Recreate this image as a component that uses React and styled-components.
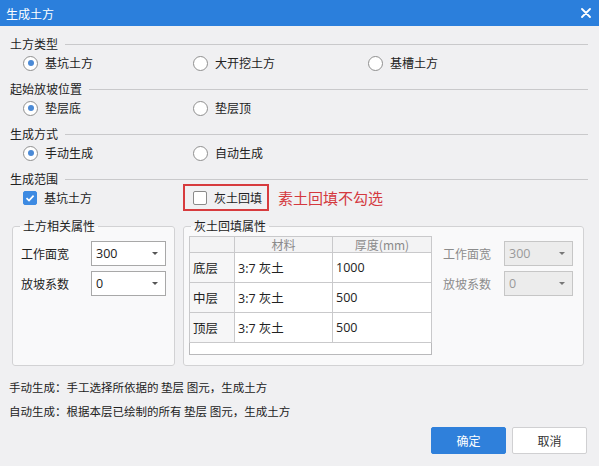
import styled, { createGlobalStyle } from 'styled-components';

const GlobalStyle = createGlobalStyle`
  html, body {
    margin: 0;
    padding: 0;
  }
  body {
    background: #f0f0f2;
    font-family: "Noto Sans CJK SC", "Noto Sans", sans-serif;
  }
`;

const Dialog = styled.div`
  width: 599px;
  height: 466px;
  display: flex;
  flex-direction: column;
  background: #f0f0f2;
  color: #222;
  font-size: 12px;
  overflow: hidden;
`;

const TitleBar = styled.div`
  height: 26px;
  flex-shrink: 0;
  display: flex;
  align-items: center;
  justify-content: space-between;
  padding: 0 8px 0 6px;
  background: #2b7fdc;
  color: #fff;
  font-size: 12px;
`;

const Body = styled.div`
  display: flex;
  flex-direction: column;
  padding: 8px 11px 0 10px;
`;

const SectionHeader = styled.div`
  display: flex;
  align-items: center;
  height: 20px;
  line-height: 20px;

  &::after {
    content: '';
    flex: 1;
    height: 1px;
    margin-left: 7px;
    background: #c9c9cb;
  }
`;

const OptionRow = styled.div`
  display: grid;
  grid-template-columns: ${(p) => p.$cols || '170px 175px 1fr'};
  align-items: start;
  height: 25px;
  padding-left: 13px;
`;

const Option = styled.label`
  display: flex;
  align-items: center;
  gap: 7px;
  height: 18px;
  line-height: 18px;
`;

const Radio = styled.span`
  position: relative;
  width: 13px;
  height: 13px;
  border: 1px solid #8f8f8f;
  border-radius: 50%;
  background: #fff;
  box-sizing: content-box;

  &::after {
    content: '';
    display: ${(p) => (p.$checked ? 'block' : 'none')};
    position: absolute;
    top: 3.5px;
    left: 3.5px;
    width: 6px;
    height: 6px;
    border-radius: 50%;
    background: #4b8ad6;
  }
`;

const Check = styled.span`
  display: flex;
  align-items: center;
  justify-content: center;
  width: 14px;
  height: 14px;
  box-sizing: border-box;
  border-radius: 2px;
  border: 1px solid ${(p) => (p.$checked ? '#3d8ae2' : '#8a8a8a')};
  background: ${(p) => (p.$checked ? '#3d8ae2' : '#fff')};
`;

const Marked = styled.div`
  display: flex;
  align-items: flex-start;
`;

const RedBox = styled.div`
  display: flex;
  margin-top: -5px;
  padding: 3px 5px 0 8px;
  height: 20px;
  border: 2px solid #d73b3e;
`;

const RedNote = styled.span`
  margin-left: 9px;
  margin-top: -1px;
  font-size: 15px;
  line-height: 20px;
  color: #d4393f;
  white-space: nowrap;
`;

const GroupRow = styled.div`
  display: flex;
  gap: 8px;
  margin: 4px 4px 0 2px;
  height: 148px;
`;

const GroupBox = styled.fieldset`
  margin: 0;
  padding: 0;
  min-width: 0;
  width: ${(p) => p.$width || 'auto'};
  flex: ${(p) => (p.$width ? '0 0 auto' : '1')};
  border: 1px solid #d2d2d4;
  border-radius: 3px;
  background: #f9f9fa;
  box-sizing: border-box;
`;

const Legend = styled.legend`
  margin-left: 7px;
  padding: 0 3px;
  line-height: 16px;
  font-size: 12px;
  color: #222;
`;

const PropGrid = styled.div`
  display: grid;
  grid-template-columns: ${(p) => p.$cols};
  grid-auto-rows: 25px;
  row-gap: 5px;
  align-items: center;
  padding: ${(p) => p.$pad};
  color: ${(p) => (p.$disabled ? '#8c8c8c' : '#222')};
`;

const Select = styled.div`
  display: flex;
  align-items: center;
  justify-content: space-between;
  height: 25px;
  box-sizing: border-box;
  padding: 0 7px 0 4px;
  border: 1px solid ${(p) => (p.$disabled ? '#c6c6c6' : '#a8a8a8')};
  background: ${(p) => (p.$disabled ? '#ececec' : '#fff')};
  color: ${(p) => (p.$disabled ? '#9a9a9a' : '#222')};
  font-family: "Open Sans", "Liberation Sans", sans-serif;
  font-size: 12.5px;

  &::after {
    content: '';
    border-left: 3px solid transparent;
    border-right: 3px solid transparent;
    border-top: 3px solid ${(p) => (p.$disabled ? '#777' : '#555')};
  }
`;

const FillPanel = styled.div`
  display: flex;
  align-items: flex-start;
  padding: 2px 0 0 5px;
`;

const Table = styled.table`
  width: 242px;
  border-collapse: collapse;
  table-layout: fixed;
  background: #fff;
  border: 1px solid #b9b9bb;
  font-size: 12.5px;
`;

const Th = styled.th`
  height: 15px;
  padding: 0;
  font-weight: normal;
  font-size: 12px;
  line-height: 15px;
  color: #8a8a8a;
  background: #f3f3f4;
  border: 1px solid #c9c9cb;
`;

const Td = styled.td`
  height: 29px;
  padding: 0 0 0 3px;
  border: 1px solid #c9c9cb;
  background: ${(p) => (p.$head ? '#f6f6f7' : '#fff')};
  font-family: "Open Sans", "Noto Sans CJK SC", sans-serif;
  white-space: nowrap;
`;

const EmptyTd = styled.td`
  height: 11px;
  padding: 0;
  border-top: 1px solid #c9c9cb;
  background: #fff;
`;

const Notes = styled.div`
  margin: 9px 0 0 -1px;
  line-height: 24px;
  font-size: 11.5px;
  color: #222;
`;

const Actions = styled.div`
  display: flex;
  justify-content: flex-end;
  gap: 6px;
  margin-top: 4px;
  padding-right: 1px;
`;

const Button = styled.button`
  width: 75px;
  height: 27px;
  border-radius: 2px;
  font-family: inherit;
  font-size: 12px;
  cursor: pointer;
  border: 1px solid ${(p) => (p.$primary ? '#2f80db' : '#d0d0d2')};
  background: ${(p) => (p.$primary ? '#2f80db' : '#fff')};
  color: ${(p) => (p.$primary ? '#fff' : '#333')};
`;

const CloseIcon = () => (
  <svg width="10" height="10" viewBox="0 0 10 10">
    <path d="M1 1 L9 9 M9 1 L1 9" stroke="#fff" strokeWidth="1.8" strokeLinecap="round" />
  </svg>
);

const Tick = () => (
  <svg width="10" height="10" viewBox="0 0 10 10">
    <path d="M1.5 5.2 L4 7.6 L8.6 2.6" fill="none" stroke="#fff" strokeWidth="1.7" />
  </svg>
);

const layers = [
  { name: '底层', material: '3:7 灰土', depth: '1000' },
  { name: '中层', material: '3:7 灰土', depth: '500' },
  { name: '顶层', material: '3:7 灰土', depth: '500' },
];

const RadioOption = ({ checked, children }) => (
  <Option>
    <Radio $checked={checked} />
    {children}
  </Option>
);

const App = () => {
  return (
    <Dialog>
      <GlobalStyle />
      <TitleBar>
        <span>生成土方</span>
        <CloseIcon />
      </TitleBar>
      <Body>
        <SectionHeader>土方类型</SectionHeader>
        <OptionRow>
          <RadioOption checked>基坑土方</RadioOption>
          <RadioOption>大开挖土方</RadioOption>
          <RadioOption>基槽土方</RadioOption>
        </OptionRow>

        <SectionHeader>起始放坡位置</SectionHeader>
        <OptionRow>
          <RadioOption checked>垫层底</RadioOption>
          <RadioOption>垫层顶</RadioOption>
        </OptionRow>

        <SectionHeader>生成方式</SectionHeader>
        <OptionRow>
          <RadioOption checked>手动生成</RadioOption>
          <RadioOption>自动生成</RadioOption>
        </OptionRow>

        <SectionHeader>生成范围</SectionHeader>
        <OptionRow $cols="160px 1fr">
          <Option>
            <Check $checked>
              <Tick />
            </Check>
            基坑土方
          </Option>
          <Marked>
            <RedBox>
              <Option>
                <Check />
                灰土回填
              </Option>
            </RedBox>
            <RedNote>素土回填不勾选</RedNote>
          </Marked>
        </OptionRow>

        <GroupRow>
          <GroupBox $width="163px">
            <Legend>土方相关属性</Legend>
            <PropGrid $cols="70px 75px" $pad="7px 0 0 8px">
              <span>工作面宽</span>
              <Select>300</Select>
              <span>放坡系数</span>
              <Select>0</Select>
            </PropGrid>
          </GroupBox>

          <GroupBox>
            <Legend>灰土回填属性</Legend>
            <FillPanel>
              <Table>
                <colgroup>
                  <col style={{ width: 45 }} />
                  <col style={{ width: 98 }} />
                  <col style={{ width: 99 }} />
                </colgroup>
                <thead>
                  <tr>
                    <Th />
                    <Th>材料</Th>
                    <Th>厚度(mm)</Th>
                  </tr>
                </thead>
                <tbody>
                  {layers.map((l) => (
                    <tr key={l.name}>
                      <Td $head>{l.name}</Td>
                      <Td>{l.material}</Td>
                      <Td>{l.depth}</Td>
                    </tr>
                  ))}
                  <tr>
                    <EmptyTd colSpan={3} />
                  </tr>
                </tbody>
              </Table>
              <PropGrid $cols="61px 69px" $pad="5px 0 0 11px" $disabled>
                <span>工作面宽</span>
                <Select $disabled>300</Select>
                <span>放坡系数</span>
                <Select $disabled>0</Select>
              </PropGrid>
            </FillPanel>
          </GroupBox>
        </GroupRow>

        <Notes>
          <div>手动生成：手工选择所依据的 垫层 图元，生成土方</div>
          <div>自动生成：根据本层已绘制的所有 垫层 图元，生成土方</div>
        </Notes>

        <Actions>
          <Button $primary>确定</Button>
          <Button>取消</Button>
        </Actions>
      </Body>
    </Dialog>
  );
};

export default App;
